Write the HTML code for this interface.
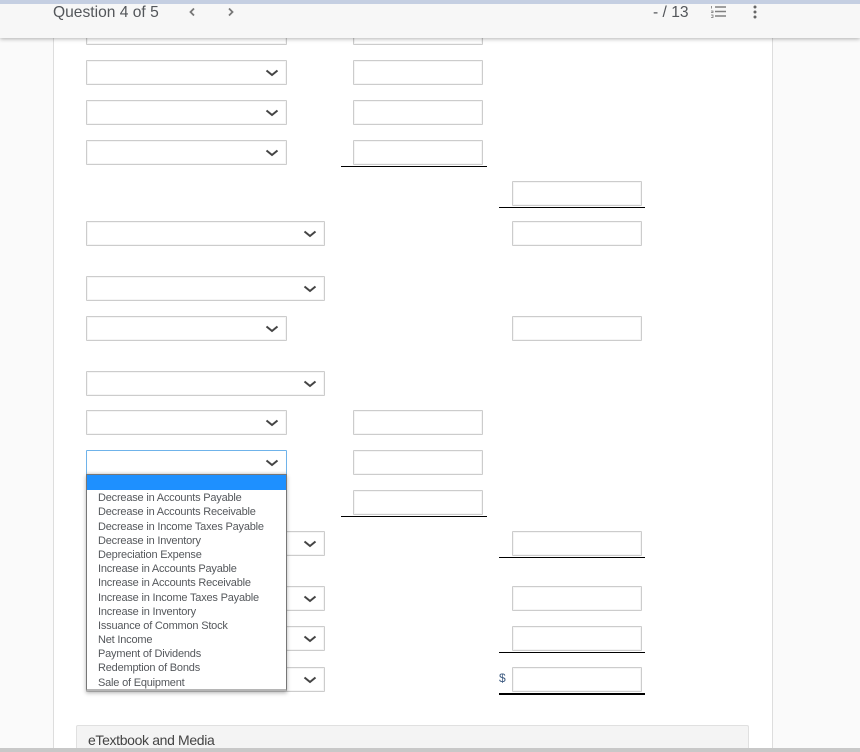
<!DOCTYPE html>
<html><head><meta charset="utf-8"><style>
html,body{margin:0;padding:0;width:860px;height:752px;overflow:hidden}
body{position:relative;background:#fafafa;font-family:"Liberation Sans",sans-serif;color:#53565a}
div,svg{position:absolute;box-sizing:border-box}
.main{left:53px;top:0;width:720px;height:752px;background:#fff;border-left:1px solid #ddd;border-right:1px solid #ddd}
.f{background:#fff;border:1px solid #ccc;box-shadow:inset 0 0 0 1px #f5f5f5;height:25px;border-radius:1px}
.s{left:86px;width:201px}.w{left:86px;width:239px}.m{left:353px;width:130px}.r{left:512px;width:130px}
.l{background:#000;height:1px}
.c{right:7px;top:8px}
.o{left:98px;font-size:11px;line-height:14px;height:14px;white-space:nowrap;letter-spacing:-.2px;color:#55585c}
</style></head><body>
<div class="main"></div>

<div class="f s" style="top:20px"></div><div class="f m" style="top:20px"></div>
<div class="f s" style="top:60px"><svg class="c" width="14" height="8" viewBox="0 0 14 8"><path d="M1.500 1.500 7 6l5.500-4.500" fill="none" stroke="#444" stroke-width="2"/></svg></div>
<div class="f m" style="top:60px"></div>
<div class="f s" style="top:100px"><svg class="c" width="14" height="8" viewBox="0 0 14 8"><path d="M1.500 1.500 7 6l5.500-4.500" fill="none" stroke="#444" stroke-width="2"/></svg></div>
<div class="f m" style="top:100px"></div>
<div class="f s" style="top:140px"><svg class="c" width="14" height="8" viewBox="0 0 14 8"><path d="M1.500 1.500 7 6l5.500-4.500" fill="none" stroke="#444" stroke-width="2"/></svg></div>
<div class="f m" style="top:140px"></div>
<div class="l" style="left:341px;top:166px;width:146px"></div>

<div class="f r" style="top:181px"></div>
<div class="l" style="left:499px;top:207px;width:146px"></div>

<div class="f w" style="top:221px"><svg class="c" width="14" height="8" viewBox="0 0 14 8"><path d="M1.500 1.500 7 6l5.500-4.500" fill="none" stroke="#444" stroke-width="2"/></svg></div>
<div class="f r" style="top:221px"></div>
<div class="f w" style="top:276px"><svg class="c" width="14" height="8" viewBox="0 0 14 8"><path d="M1.500 1.500 7 6l5.500-4.500" fill="none" stroke="#444" stroke-width="2"/></svg></div>
<div class="f s" style="top:316px"><svg class="c" width="14" height="8" viewBox="0 0 14 8"><path d="M1.500 1.500 7 6l5.500-4.500" fill="none" stroke="#444" stroke-width="2"/></svg></div>
<div class="f r" style="top:316px"></div>
<div class="f w" style="top:371px"><svg class="c" width="14" height="8" viewBox="0 0 14 8"><path d="M1.500 1.500 7 6l5.500-4.500" fill="none" stroke="#444" stroke-width="2"/></svg></div>
<div class="f s" style="top:410px"><svg class="c" width="14" height="8" viewBox="0 0 14 8"><path d="M1.500 1.500 7 6l5.500-4.500" fill="none" stroke="#444" stroke-width="2"/></svg></div>
<div class="f m" style="top:410px"></div>
<div class="f s" style="top:450px;border-color:#6fb3ea;box-shadow:inset 0 -3px 3px -2px #ddd"><svg class="c" width="14" height="8" viewBox="0 0 14 8"><path d="M1.500 1.500 7 6l5.500-4.500" fill="none" stroke="#444" stroke-width="2"/></svg></div>
<div class="f m" style="top:450px"></div>
<div class="f m" style="top:490px"></div>
<div class="l" style="left:341px;top:516px;width:146px"></div>

<div class="f w" style="top:531px"><svg class="c" width="14" height="8" viewBox="0 0 14 8"><path d="M1.500 1.500 7 6l5.500-4.500" fill="none" stroke="#444" stroke-width="2"/></svg></div>
<div class="f r" style="top:531px"></div>
<div class="l" style="left:499px;top:557px;width:146px"></div>
<div class="f w" style="top:586px"><svg class="c" width="14" height="8" viewBox="0 0 14 8"><path d="M1.500 1.500 7 6l5.500-4.500" fill="none" stroke="#444" stroke-width="2"/></svg></div>
<div class="f r" style="top:586px"></div>
<div class="f w" style="top:626px"><svg class="c" width="14" height="8" viewBox="0 0 14 8"><path d="M1.500 1.500 7 6l5.500-4.500" fill="none" stroke="#444" stroke-width="2"/></svg></div>
<div class="f r" style="top:626px"></div>
<div class="l" style="left:499px;top:652px;width:146px"></div>
<div class="f w" style="top:667px"><svg class="c" width="14" height="8" viewBox="0 0 14 8"><path d="M1.500 1.500 7 6l5.500-4.500" fill="none" stroke="#444" stroke-width="2"/></svg></div>
<div class="f r" style="top:667px"></div>
<div style="left:499px;top:671px;font-size:12px;line-height:14px;color:#3d5a80">$</div>
<div class="l" style="left:499px;top:693px;width:146px;height:2px"></div>

<div style="left:86px;top:474px;width:201px;height:217px;background:#fff;border:1px solid #777;border-bottom:2px solid #b5b5b5;box-shadow:0 2px 4px rgba(0,0,0,.3)"></div>
<div style="left:87px;top:475px;width:199px;height:15px;background:#1e90ff"></div>
<div class="o" style="top:491px">Decrease in Accounts Payable</div>
<div class="o" style="top:505px">Decrease in Accounts Receivable</div>
<div class="o" style="top:520px">Decrease in Income Taxes Payable</div>
<div class="o" style="top:534px">Decrease in Inventory</div>
<div class="o" style="top:548px">Depreciation Expense</div>
<div class="o" style="top:562px">Increase in Accounts Payable</div>
<div class="o" style="top:576px">Increase in Accounts Receivable</div>
<div class="o" style="top:591px">Increase in Income Taxes Payable</div>
<div class="o" style="top:605px">Increase in Inventory</div>
<div class="o" style="top:619px">Issuance of Common Stock</div>
<div class="o" style="top:633px">Net Income</div>
<div class="o" style="top:647px">Payment of Dividends</div>
<div class="o" style="top:661px">Redemption of Bonds</div>
<div class="o" style="top:676px">Sale of Equipment</div>

<div style="left:76px;top:725px;width:673px;height:27px;background:#f4f4f4;border:1px solid #e0e0e0;border-bottom:0;border-radius:2px 2px 0 0"></div>
<div style="left:88px;top:732px;font-size:14px;line-height:17px;color:#444;white-space:nowrap;letter-spacing:-.35px">eTextbook and Media</div>
<div style="left:0;top:748px;width:860px;height:4px;background:#c8c8c8"></div>

<div style="left:0;top:0;width:860px;height:38px;background:#f7f7f7;box-shadow:0 1px 4px rgba(0,0,0,.3)"></div>
<div style="left:0;top:0;width:860px;height:4px;background:#c5cfe2"></div>
<div style="left:53px;top:4px;font-size:15.600px;line-height:18px;color:#53565a;white-space:nowrap">Question 4 of 5</div>
<svg style="left:188px;top:7px" width="8" height="10" viewBox="0 0 8 10"><path d="M6 1.500 2.500 5 6 8.500" fill="none" stroke="#777" stroke-width="1.800"/></svg>
<svg style="left:227px;top:7px" width="8" height="10" viewBox="0 0 8 10"><path d="M2 1.500 5.500 5 2 8.500" fill="none" stroke="#777" stroke-width="1.800"/></svg>
<div style="left:653px;top:4px;font-size:15.600px;line-height:18px;color:#53565a;white-space:nowrap">- / 13</div>
<svg style="left:710px;top:5px" width="17" height="14" viewBox="0 0 17 14"><path d="M5 2h11M5 6.500h11M5 11h11" stroke="#808080" stroke-width="1.500"/><path d="M1.500 1v2.500M1 6h2v1.500H1M1 10h2v2.500H1" stroke="#777" stroke-width=".8" fill="none"/></svg>
<svg style="left:752px;top:5px" width="6" height="14" viewBox="0 0 6 14"><circle cx="3" cy="2" r="1.500" fill="#666"/><circle cx="3" cy="7" r="1.500" fill="#666"/><circle cx="3" cy="12" r="1.500" fill="#666"/></svg>
</body></html>
